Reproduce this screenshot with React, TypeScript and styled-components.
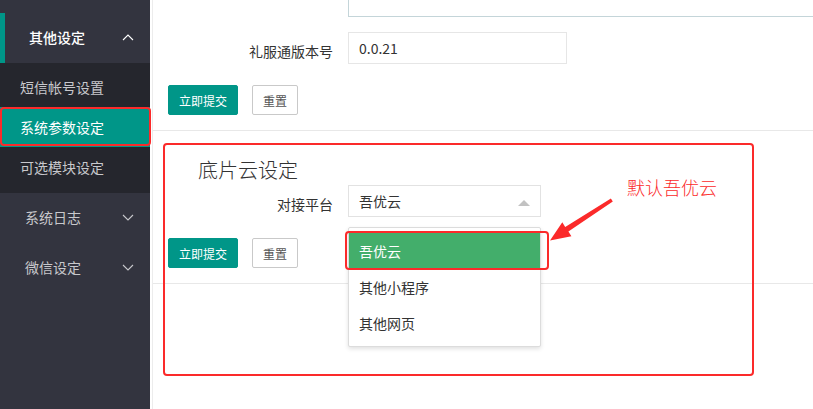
import React from "react";
import styled, { createGlobalStyle } from "styled-components";

const GlobalStyle = createGlobalStyle`
  html, body { margin: 0; padding: 0; background: #fff; }
  body {
    font-family: "Noto Sans CJK SC", "Noto Sans", "Liberation Sans", sans-serif;
    font-size: 14px;
    color: #333;
  }
  * { box-sizing: border-box; }
`;

const TEAL = "#009688";
const RED = "#fb2a2a";

const Root = styled.div`
  position: relative;
  width: 813px;
  height: 409px;
  overflow: hidden;
  display: flex;
`;

const Sidebar = styled.nav`
  width: 150px;
  flex: none;
  height: 100%;
  background: #33343f;
  padding-top: 13px;
`;

const NavHeader = styled.div<{ $open?: boolean }>`
  height: 50px;
  display: flex;
  align-items: center;
  justify-content: space-between;
  padding: 0 16px 2px ${(p) => (p.$open ? "24px" : "25px")};
  border-left: ${(p) => (p.$open ? `5px solid ${TEAL}` : "none")};
  color: ${(p) => (p.$open ? "#fff" : "#c8c8cc")};
  font-weight: ${(p) => (p.$open ? 500 : 400)};
  font-size: 14px;
`;

const SubMenu = styled.div`
  background: #25262d;
  padding: 4px 0 6px;
`;

const SubItem = styled.div<{ $active?: boolean }>`
  height: 40px;
  display: flex;
  align-items: center;
  padding-left: 20px;
  background: ${(p) => (p.$active ? TEAL : "transparent")};
  color: ${(p) => (p.$active ? "#fff" : "#c8c8cc")};
  font-size: 14px;
`;

const Main = styled.main`
  flex: 1;
  height: 100%;
  padding-left: 2px;
  background: #fff;
`;

const Panel = styled.div`
  height: 100%;
  border-left: 1px solid #ececec;
`;

const Section = styled.section<{ $padTop?: number }>`
  padding-top: ${(p) => p.$padTop ?? 0}px;
  padding-bottom: 15px;
  border-bottom: 1px solid #e8e8e8;
`;

const Row = styled.div<{ $mt?: number }>`
  display: flex;
  margin-top: ${(p) => p.$mt ?? 0}px;
`;

const Label = styled.label`
  width: 195px;
  flex: none;
  padding: 9px 15px 0 0;
  line-height: 20px;
  text-align: right;
  font-size: 14px;
  color: #333;
`;

const TextareaTail = styled.div`
  flex: 1;
  height: 17px;
  border-left: 1px solid #c4d5d9;
  border-bottom: 1px solid #c4d5d9;
`;

const Input = styled.div`
  width: 219px;
  height: 32px;
  border: 1px solid #e6e6e6;
  padding-left: 10px;
  line-height: 30px;
  font-size: 14px;
  color: #333;
`;

const ButtonRow = styled.div`
  display: flex;
  gap: 14px;
  padding-left: 15px;
  margin-top: 21px;
`;

const Button = styled.button<{ $primary?: boolean }>`
  height: 30px;
  padding: 0 10px;
  font-family: inherit;
  font-size: 12px;
  border-radius: 2px;
  border: 1px solid ${(p) => (p.$primary ? TEAL : "#c9c9c9")};
  background: ${(p) => (p.$primary ? TEAL : "#fff")};
  color: ${(p) => (p.$primary ? "#fff" : "#555")};
  cursor: pointer;
`;

const Title = styled.h2`
  margin: 0 0 1px 45px;
  height: 28px;
  line-height: 28px;
  font-size: 20px;
  font-weight: 300;
  color: #333;
`;

const Select = styled.div`
  position: relative;
  width: 193px;
  height: 32px;
  border: 1px solid #e2e2e2;
  padding-left: 10px;
  line-height: 30px;
  font-size: 14px;
  color: #333;
`;

const Caret = styled.span`
  position: absolute;
  right: 10px;
  top: 14px;
  width: 0;
  height: 0;
  border-left: 6px solid transparent;
  border-right: 6px solid transparent;
  border-bottom: 6px solid #c2c2c2;
`;

const Dropdown = styled.ul`
  position: absolute;
  left: -1px;
  top: 41px;
  width: 193px;
  margin: 0;
  padding: 5px 0;
  list-style: none;
  background: #fff;
  border: 1px solid #dcdcdc;
  border-radius: 2px;
  box-shadow: 0 2px 4px rgba(0, 0, 0, 0.12);
  z-index: 5;
`;

const Option = styled.li<{ $selected?: boolean }>`
  height: 36px;
  line-height: 36px;
  padding-left: 10px;
  font-size: 14px;
  background: ${(p) => (p.$selected ? "#43ae6b" : "transparent")};
  color: ${(p) => (p.$selected ? "#fff" : "#333")};
`;

const Mark = styled.div<{ $x: number; $y: number; $w: number; $h: number }>`
  position: absolute;
  left: ${(p) => p.$x}px;
  top: ${(p) => p.$y}px;
  width: ${(p) => p.$w}px;
  height: ${(p) => p.$h}px;
  border: 2px solid ${RED};
  border-radius: 4px;
  pointer-events: none;
  z-index: 10;
`;

const Note = styled.div`
  position: absolute;
  left: 627px;
  top: 175px;
  font-size: 18px;
  line-height: 24px;
  font-weight: 300;
  color: ${RED};
  z-index: 10;
`;

const ArrowLayer = styled.svg`
  position: absolute;
  left: 0;
  top: 0;
  pointer-events: none;
  z-index: 10;
`;

const Chevron = ({ up }: { up?: boolean }) => (
  <svg width="12" height="7" viewBox="0 0 12 7" fill="none">
    <polyline
      points={up ? "1,6 6,1 11,6" : "1,1 6,6 11,1"}
      stroke={up ? "#fff" : "#c8c8cc"}
      strokeWidth="1.1"
    />
  </svg>
);

export default function App() {
  return (
    <>
      <GlobalStyle />
      <Root>
        <Sidebar>
          <NavHeader $open>
            <span>其他设定</span>
            <Chevron up />
          </NavHeader>
          <SubMenu>
            <SubItem>短信帐号设置</SubItem>
            <SubItem $active>系统参数设定</SubItem>
            <SubItem>可选模块设定</SubItem>
          </SubMenu>
          <NavHeader>
            <span>系统日志</span>
            <Chevron />
          </NavHeader>
          <NavHeader>
            <span>微信设定</span>
            <Chevron />
          </NavHeader>
        </Sidebar>
        <Main>
          <Panel>
            <Section>
              <Row>
                <Label as="span" />
                <TextareaTail />
              </Row>
              <Row $mt={15}>
                <Label>礼服通版本号</Label>
                <Input>0.0.21</Input>
              </Row>
              <ButtonRow>
                <Button $primary>立即提交</Button>
                <Button>重置</Button>
              </ButtonRow>
            </Section>
            <Section $padTop={25}>
              <Title>底片云设定</Title>
              <Row>
                <Label>对接平台</Label>
                <Select>
                  吾优云
                  <Caret />
                  <Dropdown>
                    <Option $selected>吾优云</Option>
                    <Option>其他小程序</Option>
                    <Option>其他网页</Option>
                  </Dropdown>
                </Select>
              </Row>
              <ButtonRow>
                <Button $primary>立即提交</Button>
                <Button>重置</Button>
              </ButtonRow>
            </Section>
          </Panel>
        </Main>

        <Mark $x={0} $y={107} $w={151} $h={39} />
        <Mark $x={163} $y={143} $w={591} $h={233} />
        <Mark $x={345} $y={231} $w={204} $h={39} />
        <Note>默认吾优云</Note>
        <ArrowLayer width="813" height="409" viewBox="0 0 813 409">
          <polygon
            points="612.8,201.6 568.4,231.5 571.4,236.2 550,240.5 562.3,222.3 565.2,227 610.9,198.4"
            fill={RED}
          />
        </ArrowLayer>
      </Root>
    </>
  );
}
